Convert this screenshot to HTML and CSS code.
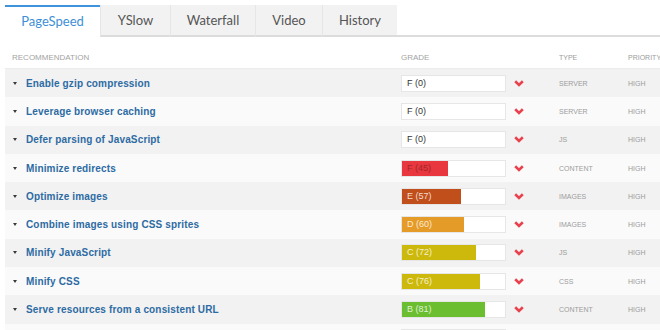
FILE: index.html
```html
<!DOCTYPE html>
<html lang="en">

<head>
  <meta charset="UTF-8">
  <title>PageSpeed</title>
  <link rel="stylesheet" href="styles.css">
</head>

<body>
  <!-- Tabs -->
  <div class="tabbar">
    <div class="tab tab-pagespeed active">PageSpeed</div>
    <div class="tab tab-yslow">YSlow</div>
    <div class="tab tab-waterfall">Waterfall</div>
    <div class="tab tab-video">Video</div>
    <div class="tab tab-history">History</div>
    <div class="tab-rest"></div>
  </div>

  <!-- Recommendations table -->
  <div class="report">
    <div class="row head">
      <div class="col-rec">Recommendation</div>
      <div class="col-grade">Grade</div>
      <div class="col-type">Type</div>
      <div class="col-prio">Priority</div>
    </div>

    <div class="row">
      <div class="col-rec"><span class="caret"></span><a class="rec">Enable gzip compression</a></div>
      <div class="col-grade">
        <div class="bar"><span class="fill" style="width:0%"></span><span class="label">F (0)</span></div>
        <svg class="chev" width="10" height="7" viewBox="0 0 10 7"><polyline points="1.2,1.3 5,5 8.8,1.3" /></svg>
      </div>
      <div class="col-type">Server</div>
      <div class="col-prio">High</div>
    </div>

    <div class="row">
      <div class="col-rec"><span class="caret"></span><a class="rec">Leverage browser caching</a></div>
      <div class="col-grade">
        <div class="bar"><span class="fill" style="width:0%"></span><span class="label">F (0)</span></div>
        <svg class="chev" width="10" height="7" viewBox="0 0 10 7"><polyline points="1.2,1.3 5,5 8.8,1.3" /></svg>
      </div>
      <div class="col-type">Server</div>
      <div class="col-prio">High</div>
    </div>

    <div class="row">
      <div class="col-rec"><span class="caret"></span><a class="rec">Defer parsing of JavaScript</a></div>
      <div class="col-grade">
        <div class="bar"><span class="fill" style="width:0%"></span><span class="label">F (0)</span></div>
        <svg class="chev" width="10" height="7" viewBox="0 0 10 7"><polyline points="1.2,1.3 5,5 8.8,1.3" /></svg>
      </div>
      <div class="col-type">JS</div>
      <div class="col-prio">High</div>
    </div>

    <div class="row">
      <div class="col-rec"><span class="caret"></span><a class="rec">Minimize redirects</a></div>
      <div class="col-grade">
        <div class="bar grade-f"><span class="fill" style="width:45%"></span><span class="label">F (45)</span></div>
        <svg class="chev" width="10" height="7" viewBox="0 0 10 7"><polyline points="1.2,1.3 5,5 8.8,1.3" /></svg>
      </div>
      <div class="col-type">Content</div>
      <div class="col-prio">High</div>
    </div>

    <div class="row">
      <div class="col-rec"><span class="caret"></span><a class="rec">Optimize images</a></div>
      <div class="col-grade">
        <div class="bar grade-e"><span class="fill" style="width:57%"></span><span class="label">E (57)</span></div>
        <svg class="chev" width="10" height="7" viewBox="0 0 10 7"><polyline points="1.2,1.3 5,5 8.8,1.3" /></svg>
      </div>
      <div class="col-type">Images</div>
      <div class="col-prio">High</div>
    </div>

    <div class="row">
      <div class="col-rec"><span class="caret"></span><a class="rec">Combine images using CSS sprites</a></div>
      <div class="col-grade">
        <div class="bar grade-d"><span class="fill" style="width:60%"></span><span class="label">D (60)</span></div>
        <svg class="chev" width="10" height="7" viewBox="0 0 10 7"><polyline points="1.2,1.3 5,5 8.8,1.3" /></svg>
      </div>
      <div class="col-type">Images</div>
      <div class="col-prio">High</div>
    </div>

    <div class="row">
      <div class="col-rec"><span class="caret"></span><a class="rec">Minify JavaScript</a></div>
      <div class="col-grade">
        <div class="bar grade-c"><span class="fill" style="width:72%"></span><span class="label">C (72)</span></div>
        <svg class="chev" width="10" height="7" viewBox="0 0 10 7"><polyline points="1.2,1.3 5,5 8.8,1.3" /></svg>
      </div>
      <div class="col-type">JS</div>
      <div class="col-prio">High</div>
    </div>

    <div class="row">
      <div class="col-rec"><span class="caret"></span><a class="rec">Minify CSS</a></div>
      <div class="col-grade">
        <div class="bar grade-c"><span class="fill" style="width:76%"></span><span class="label">C (76)</span></div>
        <svg class="chev" width="10" height="7" viewBox="0 0 10 7"><polyline points="1.2,1.3 5,5 8.8,1.3" /></svg>
      </div>
      <div class="col-type">CSS</div>
      <div class="col-prio">High</div>
    </div>

    <div class="row">
      <div class="col-rec"><span class="caret"></span><a class="rec">Serve resources from a consistent URL</a></div>
      <div class="col-grade">
        <div class="bar grade-b"><span class="fill" style="width:81%"></span><span class="label">B (81)</span></div>
        <svg class="chev" width="10" height="7" viewBox="0 0 10 7"><polyline points="1.2,1.3 5,5 8.8,1.3" /></svg>
      </div>
      <div class="col-type">Content</div>
      <div class="col-prio">High</div>
    </div>

    <!-- next row, only its top edge shows -->
    <div class="row">
      <div class="col-rec"></div>
      <div class="col-grade">
        <div class="bar"></div>
      </div>
    </div>
  </div>
</body>

</html>
```

FILE: styles.css
```css
/* Page */
body {
  margin: 0;
  font-family: "Liberation Sans", Arial, sans-serif;
  background-color: #ffffff;
  overflow: hidden;
}

/* Tabs */
.tabbar {
  display: flex;
  padding: 5px 0 0 5px;
  width: 700px;
}

.tab {
  box-sizing: border-box;
  height: 32px;
  line-height: 30px;
  text-align: center;
  font-family: Lato, "Open Sans", sans-serif;
  font-size: 13px;
  color: #555;
  background-color: #f2f2f2;
  border-left: 1px solid #e6e6e6;
  border-bottom: 2px solid #dcdcdc;
}

.tab.active {
  line-height: 28px;
  border-top: 2px solid #3d94dc;
  border-left: none;
  border-bottom-color: #ffffff;
  background-color: #ffffff;
  color: #3d8fd6;
}

.tab-pagespeed { width: 95px; }
.tab-yslow { width: 70px; }
.tab-waterfall { width: 85px; }
.tab-video { width: 67px; }
.tab-history { width: 75px; }

.tab-rest {
  flex: 1;
  border-bottom: 2px solid #dcdcdc;
}

/* Table */
.report {
  margin-left: 5px;
  width: 700px;
}

.row {
  display: grid;
  grid-template-columns: 396px 158px 69px 1fr;
  align-items: center;
  height: 28.3px;
  background-color: #f2f2f2;
}

.row:nth-child(odd) {
  background-color: #fafafa;
}

.row.head {
  height: 10px;
  padding: 16px 0 5px;
  border-bottom: 1px solid #ececec;
  background-color: #ffffff;
  font-size: 8px;
  line-height: 10px;
  color: #a3a3a3;
  text-transform: uppercase;
}

.row.head .col-rec {
  padding-left: 7px;
}

.col-rec {
  display: flex;
  align-items: center;
  padding-left: 8px;
}

.caret {
  width: 0;
  height: 0;
  border-left: 2.5px solid transparent;
  border-right: 2.5px solid transparent;
  border-top: 3.5px solid #3a3a3a;
  margin-right: 9px;
}

.rec {
  font-size: 10px;
  font-weight: bold;
  letter-spacing: 0.15px;
  color: #2d6ba3;
  cursor: pointer;
}

.col-grade {
  display: flex;
  align-items: center;
}

.bar {
  position: relative;
  width: 103px;
  height: 15px;
  border: 1px solid #e6e6e6;
  background-color: #ffffff;
}

.fill {
  position: absolute;
  left: 0;
  top: 0;
  bottom: 0;
}

.label {
  position: relative;
  display: block;
  padding-left: 5px;
  font-size: 9px;
  line-height: 15px;
  color: #333;
  white-space: nowrap;
}

.chev {
  margin-left: 8px;
}

.chev polyline {
  fill: none;
  stroke: #e8424f;
  stroke-width: 2.6;
}

.col-type,
.col-prio {
  font-size: 7px;
  color: #9c9c9c;
  text-transform: uppercase;
}

/* Grade colours */
.grade-f .fill {
  background-color: #e8373e;
}

.grade-f .label {
  color: #a3262b;
}

.grade-e .fill {
  background-color: #c14f1b;
}

.grade-d .fill {
  background-color: #e59b28;
}

.grade-c .fill {
  background-color: #cdb90c;
}

.grade-b .fill {
  background-color: #6bbe2f;
}

.grade-e .label,
.grade-d .label,
.grade-c .label,
.grade-b .label {
  color: rgba(255, 255, 255, 0.8);
}
```
